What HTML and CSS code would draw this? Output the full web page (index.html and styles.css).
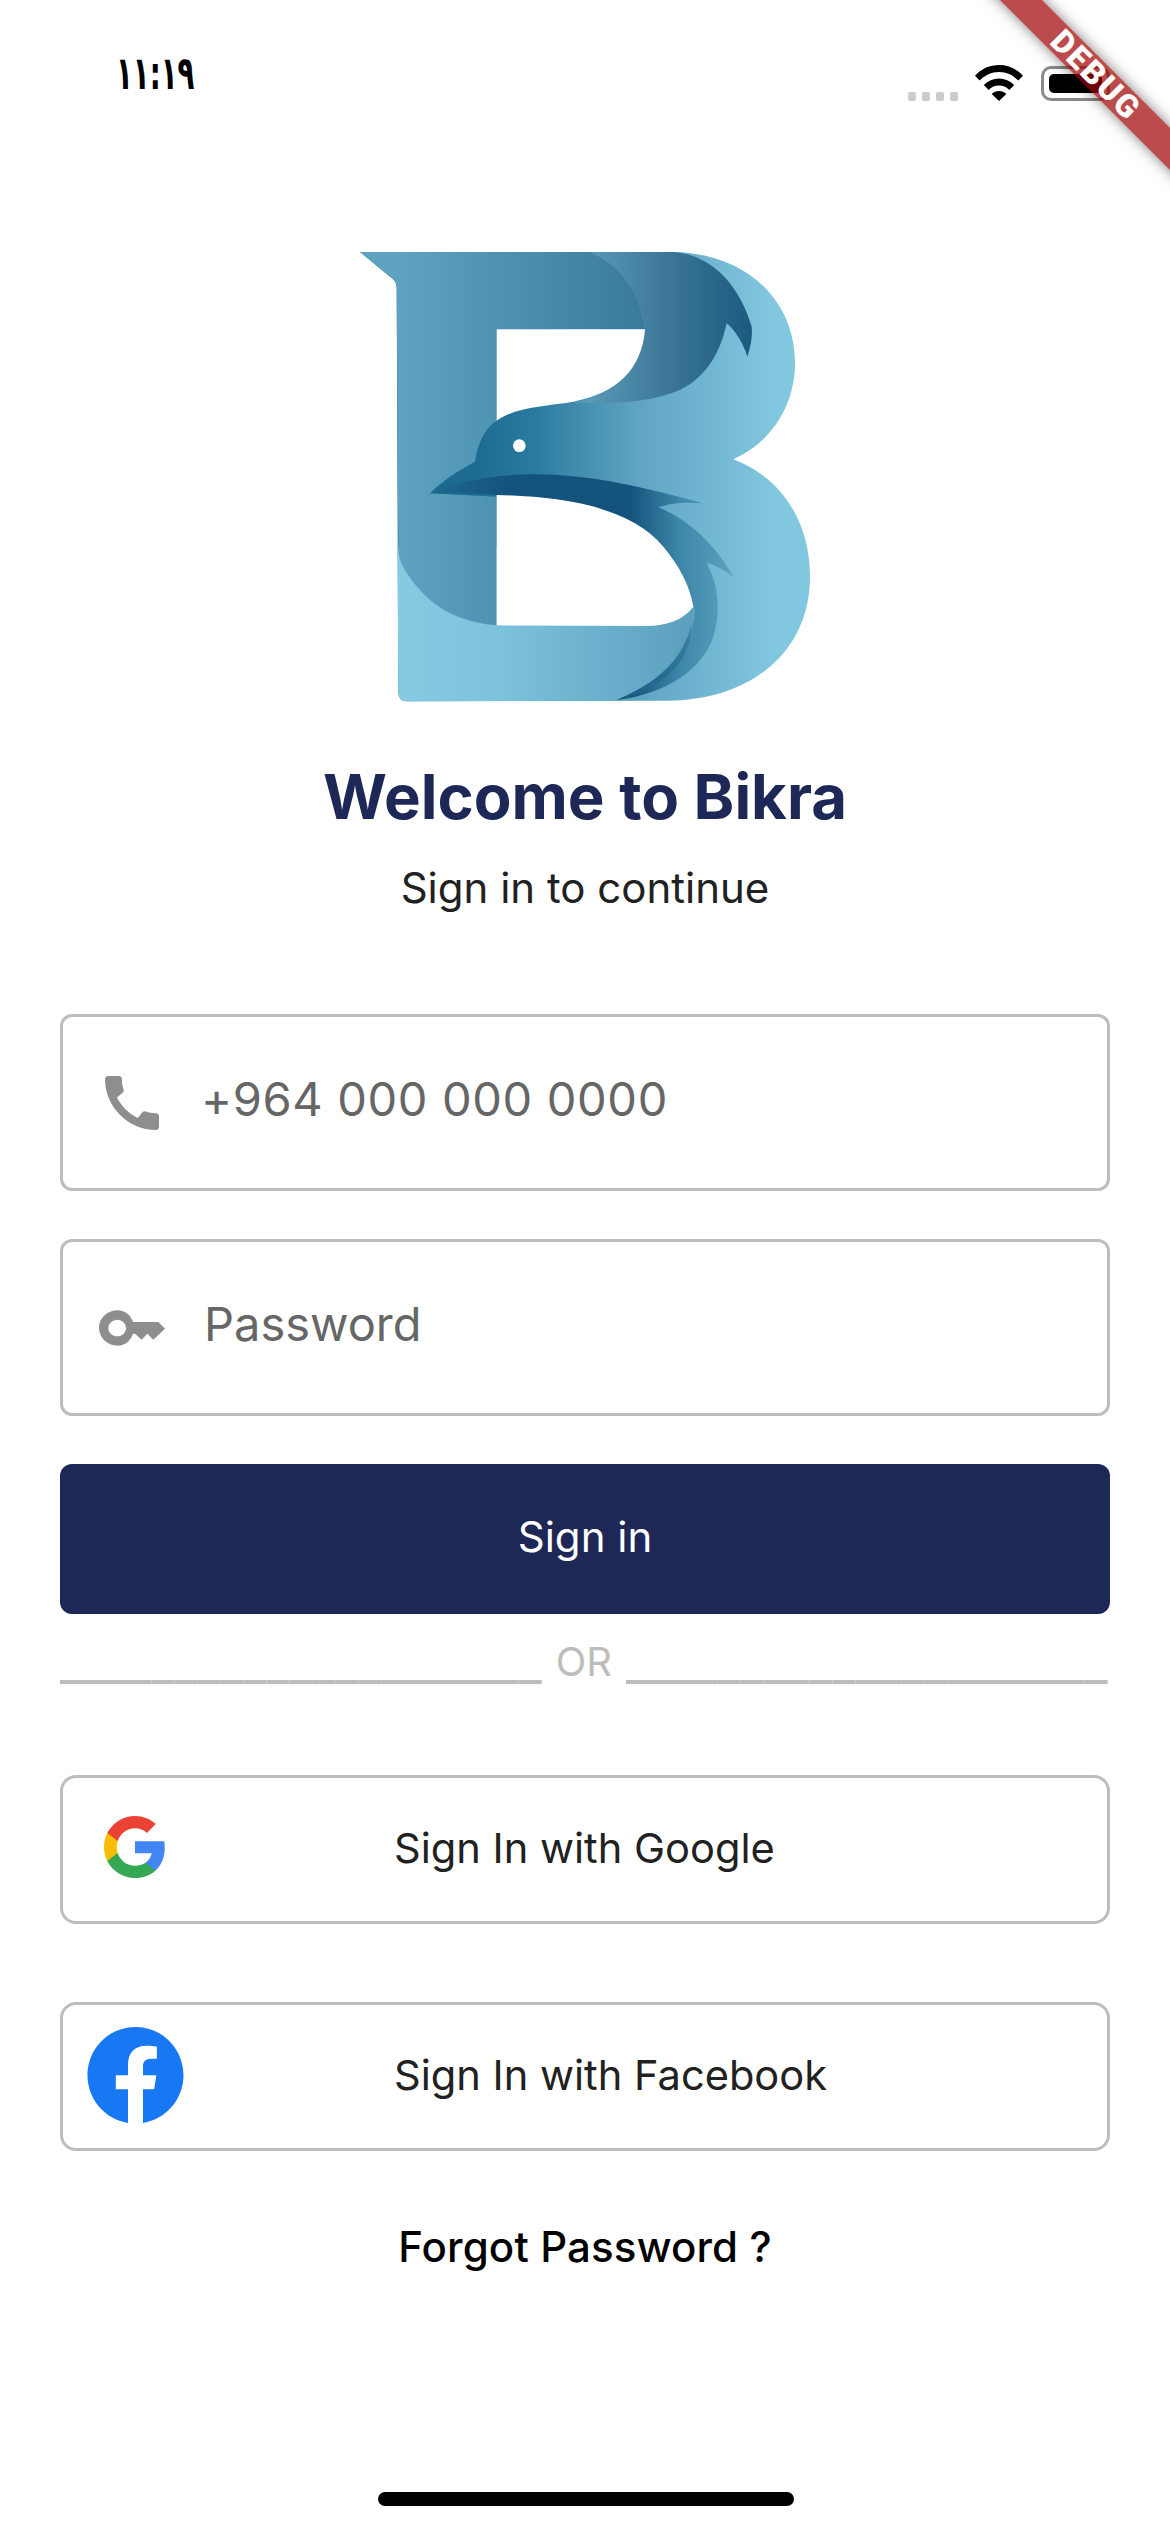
FILE: index.html
```html
<!DOCTYPE html>
<html lang="en">
<head>
<meta charset="utf-8">
<title>Bikra</title>
<link rel="stylesheet" href="styles.css">
</head>
<body>
<div class="screen">
  <header class="status">
    <span class="time">۱۱:۱۹</span>
    <div class="status-icons">
      <div class="dots"><i></i><i></i><i></i><i></i></div>
      <svg class="wifi" viewBox="0 0 48 36"><path d="M24 0C15 0 6.500 3.400 0 10.800L4.700 15.600C10 10 16.500 7 24 7s14 3 19.300 8.600L48 10.800C41.500 3.400 33 0 24 0z"/><path d="M24 13.500c-5.800 0-11 2.300-15.200 6.500l4.800 5c2.900-2.900 6.500-4.400 10.400-4.400s7.500 1.500 10.400 4.400l4.800-5C35 15.800 29.800 13.500 24 13.500z"/><path d="M24 26c-2.900 0-5.500 1.100-7.300 3L24 36l7.300-7c-1.800-1.900-4.400-3-7.300-3z"/></svg>
      <div class="battery"><div class="battery-fill"></div></div>
    </div>
  </header>

  <svg class="logo" viewBox="0 0 1530 1500" role="img" aria-label="Bikra logo">
    <defs>
      <linearGradient id="gUpper" gradientUnits="userSpaceOnUse" x1="430" y1="0" x2="1330" y2="0">
        <stop offset="0" stop-color="#1d6a90"/><stop offset=".2" stop-color="#2a7a9f"/><stop offset=".55" stop-color="#5fa5c3"/><stop offset="1" stop-color="#81c7df"/>
      </linearGradient>
      <linearGradient id="gBand" gradientUnits="userSpaceOnUse" x1="200" y1="0" x2="1110" y2="0">
        <stop offset="0" stop-color="#86cbe2"/><stop offset=".35" stop-color="#7cc2db"/><stop offset="1" stop-color="#5a9ebc"/>
      </linearGradient>
      <linearGradient id="gStem" gradientUnits="userSpaceOnUse" x1="200" y1="0" x2="940" y2="0">
        <stop offset="0" stop-color="#5ea3c1"/><stop offset=".4" stop-color="#4f93b3"/><stop offset="1" stop-color="#3a7a9b"/>
      </linearGradient>
      <linearGradient id="gWing" gradientUnits="userSpaceOnUse" x1="780" y1="0" x2="1265" y2="0">
        <stop offset="0" stop-color="#5b98b5"/><stop offset=".45" stop-color="#3d7899"/><stop offset="1" stop-color="#1d5a80"/>
      </linearGradient>
      <linearGradient id="gFeather" gradientUnits="userSpaceOnUse" x1="300" y1="0" x2="1210" y2="0">
        <stop offset="0" stop-color="#1d6a90"/><stop offset=".25" stop-color="#14537c"/><stop offset=".66" stop-color="#14537c"/><stop offset=".82" stop-color="#3c86a8"/><stop offset="1" stop-color="#5da2bf"/>
      </linearGradient>
      <linearGradient id="gTail" gradientUnits="userSpaceOnUse" x1="0" y1="1180" x2="0" y2="1410">
        <stop offset="0" stop-color="#3f88aa"/><stop offset="1" stop-color="#1b5f85"/>
      </linearGradient>
    </defs>
    <path fill="url(#gUpper)" d="M90 66H1030C1250 70 1395 210 1395 400C1395 530 1320 640 1210 688C1350 740 1440 870 1440 1040C1440 1260 1270 1410 1010 1412L230 1414Q205 1414 205 1385L200 170Q198 150 180 140Z"/>
    <path fill="url(#gBand)" d="M202 950H1090V1180C1060 1300 980 1370 860 1412L230 1414Q205 1414 205 1385Z"/>
    <path fill="url(#gStem)" d="M90 66H780C880 110 930 190 945 298H500V1186C420 1180 330 1150 270 1080C225 1030 205 990 205 960L200 170Q198 150 180 140Z"/>
    <path fill="url(#gUpper)" d="M435 695C445 630 470 590 500 572L730 518L1000 500L1100 820L500 800L300 790C350 740 400 715 435 695Z"/>
    <path fill="url(#gWing)" d="M780 66H1030C1150 75 1230 170 1265 290C1268 320 1262 350 1252 380C1240 340 1215 300 1190 280C1170 370 1130 440 1050 480C950 520 850 522 730 518C860 490 935 420 945 298C930 190 880 110 780 66Z"/>
    <path fill="url(#gFeather)" d="M300 790C400 750 500 733 620 733C800 735 950 775 1120 820C1060 815 1020 820 985 832C1080 870 1160 950 1210 1040C1180 1020 1150 1000 1130 1000C1170 1070 1170 1160 1150 1220C1120 1310 1020 1390 860 1410C980 1360 1060 1290 1085 1200C1095 1160 1095 1130 1090 1130C1070 1040 1020 970 950 910C850 840 700 810 500 795C430 788 360 788 300 790Z"/>
    <path fill="url(#gTail)" d="M860 1410C980 1360 1060 1290 1085 1180C1085 1280 1020 1370 860 1410Z"/>
    <path fill="#fff" d="M500 298H945C935 420 860 490 730 515C640 530 560 530 500 572Z"/>
    <path fill="#fff" d="M500 795C700 800 900 830 1000 950C1050 1010 1080 1070 1090 1130C1060 1170 1010 1187 950 1188L500 1186Z"/>
    <circle cx="568" cy="647" r="19" fill="#fff"/>
  </svg>

  <h1 class="title">Welcome to Bikra</h1>
  <p class="subtitle">Sign in to continue</p>

  <form class="form">
    <div class="field">
      <svg class="phone-icon" viewBox="3 3 18 18"><path d="M20.010 15.380c-1.230 0-2.420-.2-3.530-.56-.35-.12-.74-.03-1.010.24l-1.570 1.970c-2.830-1.350-5.480-3.900-6.890-6.830l1.950-1.660c.27-.28.35-.67.24-1.020-.37-1.110-.56-2.300-.56-3.530 0-.54-.45-.99-.99-.99H4.190C3.650 3 3 3.240 3 3.990 3 13.280 10.730 21 20.010 21c.71 0 .99-.63.99-1.180v-3.450c0-.54-.45-.99-.99-.99z"/></svg>
      <span class="placeholder phone-text">+964 000 000 0000</span>
    </div>
    <div class="field">
      <svg class="key-icon" viewBox="177 930 198 106"><path fill-rule="evenodd" d="M232 930C256 930 272 945 279 965H355L375 985L340 1018L322 1000L305 1018L285 1000H279C272 1021 256 1036 232 1036C202 1036 177 1012 177 983C177 954 202 930 232 930ZM232 958C218 958 205 969 205 983C205 997 218 1008 232 1008C246 1008 258 997 258 983C258 969 246 958 232 958Z"/></svg>
      <span class="placeholder">Password</span>
    </div>
    <button class="primary" type="button">Sign in</button>
  </form>

  <div class="divider"><span class="rule">_____________________</span><span class="or">OR</span><span class="rule">_____________________</span></div>

  <div class="social google">
    <svg class="google-icon" viewBox="0 0 18 18"><path fill="#4285f4" d="M17.640 9.200c0-.637-.057-1.251-.164-1.840H9v3.481h4.844c-.209 1.125-.843 2.078-1.796 2.717v2.258h2.908c1.702-1.567 2.684-3.874 2.684-6.615z"/><path fill="#34a853" d="M9 18c2.430 0 4.467-.806 5.956-2.180l-2.908-2.259c-.806.54-1.837.86-3.048.86-2.344 0-4.328-1.584-5.036-3.711H.957v2.332C2.438 15.983 5.482 18 9 18z"/><path fill="#fbbc05" d="M3.964 10.710c-.18-.54-.282-1.117-.282-1.710s.102-1.170.282-1.710V4.958H.957C.347 6.173 0 7.548 0 9s.348 2.827.957 4.042l3.007-2.332z"/><path fill="#ea4335" d="M9 3.580c1.321 0 2.508.454 3.440 1.345l2.582-2.580C13.463.891 11.426 0 9 0 5.482 0 2.438 2.017.957 4.958L3.964 7.290C4.672 5.163 6.656 3.580 9 3.580z"/></svg>
    <span class="social-label">Sign In with Google</span>
  </div>
  <div class="social facebook">
    <svg class="facebook-icon" viewBox="0 0 16 16"><path fill="#1877f2" d="M16 8.049c0-4.446-3.582-8.050-8-8.050C3.580 0-.002 3.603-.002 8.050c0 4.017 2.926 7.347 6.750 7.951v-5.625h-2.030V8.050H6.750V6.275c0-2.017 1.195-3.131 3.022-3.131.876 0 1.791.157 1.791.157v1.980h-1.009c-.993 0-1.303.621-1.303 1.258v1.510h2.218l-.354 2.326H9.250V16c3.824-.604 6.750-3.934 6.750-7.951z"/></svg>
    <span class="social-label">Sign In with Facebook</span>
  </div>

  <p class="forgot">Forgot Password ?</p>
  <div class="home-indicator"></div>

  <div class="banner"><span>DEBUG</span></div>
</div>
</body>
</html>
```
FILE: styles.css
```css
* { box-sizing: border-box; }
html, body { margin: 0; padding: 0; background: #fff; }
.screen {
  position: relative;
  width: 1170px;
  height: 2532px;
  overflow: hidden;
  display: flex;
  flex-direction: column;
  font-family: Inter, "Noto Sans", sans-serif;
  color: #212121;
}
.status {
  height: 230px;
  padding: 46px 60px 0 116px;
  display: flex;
  justify-content: space-between;
  align-items: flex-start;
}
.time {
  font-family: "DejaVu Sans", sans-serif;
  font-size: 46px;
  line-height: 54px;
  font-weight: 700;
  color: #000;
  transform: scaleX(.6);
  transform-origin: left center;
}
.status-icons { display: flex; align-items: flex-end; height: 44px; margin-top: 11px; }
.dots { display: flex; gap: 6px; margin-right: 17px; }
.dots i { width: 8px; height: 9px; border-radius: 2px; background: #ccc; }
.wifi { width: 48px; height: 36px; margin-right: 18px; }
.battery {
  width: 69px;
  height: 35px;
  padding: 5px;
  border: 3px solid #8a8a8a;
  border-radius: 10px;
}
.battery-fill { width: 100%; height: 100%; background: #000; border-radius: 5px; }
.logo { display: block; width: 510px; height: 500px; margin: 0 auto; flex: none; }
.title {
  margin: 35px 0 0;
  font-size: 61.7px;
  line-height: 64px;
  font-weight: 700;
  text-align: center;
  color: #1e2857;
}
.subtitle { margin: 35px 0 0; font-size: 42px; line-height: 48px; text-align: center; color: #212121; }
.form { display: flex; flex-direction: column; margin: 102px 60px 0; gap: 48px; }
.field {
  height: 177px;
  display: flex;
  align-items: center;
  border: 3px solid #bdbdbd;
  border-radius: 12px;
}
.phone-icon { width: 54px; height: 54px; margin-left: 42px; fill: #8e8e8e; }
.key-icon { width: 66px; height: 36px; margin-left: 36px; fill: #8e8e8e; }
.placeholder { font-size: 47px; color: #666; margin: 0 0 9px 42px; }
.phone-text { letter-spacing: .65px; }
.key-icon + .placeholder { margin-left: 39px; }
.primary {
  height: 150px;
  padding: 0 0 5px;
  border: 0;
  border-radius: 12px;
  background: #1e2857;
  color: #fff;
  font: 400 42px Inter, sans-serif;
}
.divider {
  display: flex;
  justify-content: flex-start;
  align-items: flex-end;
  gap: 14px;
  height: 48px;
  margin: 24px 60px 0;
  line-height: 48px;
  color: #bdbdbd;
}
.divider .rule { font-size: 50.3px; white-space: nowrap; }
.divider .or { font-size: 40px; }
.social {
  position: relative;
  height: 149px;
  margin: 0 60px;
  display: flex;
  align-items: center;
  padding: 0 0 3px 331px;
  border: 3px solid #bdbdbd;
  border-radius: 16px;
}
.google { margin-top: 89px; }
.facebook { margin-top: 78px; }
.social-label { font-size: 41.6px; }
.google-icon { position: absolute; left: 41px; top: 38px; width: 62px; height: 62px; }
.facebook-icon { position: absolute; left: 24px; top: 22px; width: 97px; height: 96px; }
.forgot { margin: 72px 0 0; font-size: 42px; line-height: 48px; font-weight: 500; letter-spacing: .15px; text-align: center; color: #000; }
.home-indicator {
  position: absolute;
  left: 378px;
  top: 2492px;
  width: 416px;
  height: 14px;
  border-radius: 7px;
  background: #000;
}
.banner {
  position: absolute;
  left: 921px;
  top: 55px;
  width: 340px;
  height: 30px;
  padding-left: 14px;
  transform: rotate(45deg);
  background: rgba(160, 0, 0, .7);
  box-shadow: 0 0 14px rgba(0, 0, 0, .5);
  display: flex;
  align-items: center;
  justify-content: center;
  color: #fff;
  font: 900 32px/30px Roboto, sans-serif;
  letter-spacing: 2px;
}
```
